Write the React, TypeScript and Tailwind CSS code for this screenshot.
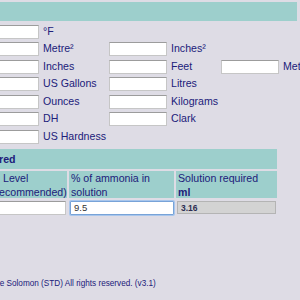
const font = { fontFamily: '"Liberation Sans", Arial, sans-serif' };

type Cell = { unit?: string; input?: boolean };

const rows: Cell[][] = [
  [{ input: true, unit: "°F" }],
  [{ input: true, unit: "Metre²" }, { input: true, unit: "Inches²" }],
  [{ input: true, unit: "Inches" }, { input: true, unit: "Feet" }, { input: true, unit: "Metres" }],
  [{ input: true, unit: "US Gallons" }, { input: true, unit: "Litres" }],
  [{ input: true, unit: "Ounces" }, { input: true, unit: "Kilograms" }],
  [{ input: true, unit: "DH" }, { input: true, unit: "Clark" }],
  [{ input: true, unit: "US Hardness" }],
];

const Field = () => (
  <input
    type="text"
    className="h-[14px] w-[58px] border border-[#c6c6c6] border-t-[#9c9c9c] bg-white outline-none"
  />
);

export default function App() {
  return (
    <div
      className="h-[300px] w-[300px] overflow-hidden bg-[#dedce5] text-[#20207a]"
      style={font}
    >
      <div className="mt-[2px] h-[19px] w-[297px] bg-[#9dcfcc]" />

      <div className="ml-[-19px] mt-[2px] grid grid-cols-[58px_70px_58px_54px_58px_80px] auto-rows-[17.5px] items-center text-[10.6px]">
        {rows.map((row, i) =>
          [0, 1, 2].map((c) => {
            const cell = row[c];
            return cell ? (
              <div key={`${i}-${c}`} className="contents">
                <Field />
                <span className="whitespace-nowrap pl-1">{cell.unit}</span>
              </div>
            ) : (
              <div key={`${i}-${c}`} className="contents">
                <span />
                <span />
              </div>
            );
          })
        )}
      </div>

      <div className="ml-[-90px] mt-px grid w-max grid-cols-[76px_77px_105px_101px] gap-[2px] p-[2px] text-[10.6px] leading-[14px]">
        <div className="col-span-4 flex h-[20px] items-center whitespace-nowrap bg-[#9dcfcc] pl-[10px] font-bold">
          Ammonia required
        </div>

        <div className="h-[27px] bg-[#9dcfcc] pl-[2px]">Tank volume</div>
        <div className="h-[27px] whitespace-nowrap bg-[#9dcfcc] pl-[2px]">
          <span className="pl-[11px]">Level</span>
          <br />
          (recommended)
        </div>
        <div className="h-[27px] bg-[#9dcfcc] pl-[2px]">
          % of ammonia in
          <br />
          solution
        </div>
        <div className="h-[27px] bg-[#9dcfcc] pl-[2px]">
          Solution required
          <br />
          <b>ml</b>
        </div>

        <div className="flex h-[16px] items-center">
          <input type="text" className="h-[14px] w-full border border-[#c6c6c6] border-t-[#9c9c9c] bg-white outline-none" />
        </div>
        <div className="flex h-[16px] items-center">
          <input type="text" className="h-[14px] w-[76px] border border-[#c6c6c6] border-t-[#9c9c9c] bg-white outline-none" />
        </div>
        <div className="flex h-[16px] items-center pl-px">
          <input
            type="text"
            defaultValue="9.5"
            className="h-[14px] w-[104px] rounded-[1px] border border-[#78a3d8] bg-white pl-[3px] text-[9.5px] text-[#333] shadow-[0_0_0_1px_#a8c6ec] outline-none"
          />
        </div>
        <div className="flex h-[16px] items-center pl-px">
          <input
            type="text"
            readOnly
            defaultValue="3.16"
            className="h-[13px] w-[99px] border border-[#b4b4b4] bg-[#d3d3d3] pl-[3px] text-[8.5px] font-bold text-[#2c2c50] outline-none"
          />
        </div>
      </div>

      <div className="ml-[-25px] mt-[60px] whitespace-nowrap text-[8.2px]">
        © Steve Solomon (STD) All rights reserved. (v3.1)
      </div>
    </div>
  );
}
